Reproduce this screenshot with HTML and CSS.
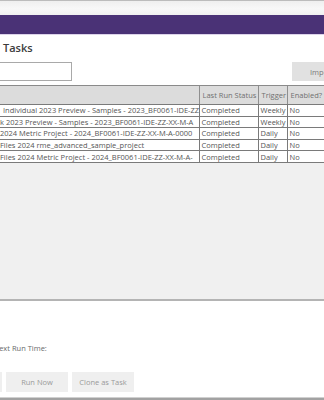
FILE: index.html
```html
<!DOCTYPE html>
<html>
<head>
<meta charset="utf-8">
<link rel="stylesheet" href="styles.css">
</head>
<body>
<div class="app">
  <div class="chrome"></div>
  <div class="topbar"></div>
  <main class="content">
    <h1 class="title">Tasks</h1>
    <div class="toolbar">
      <input class="search" type="text">
      <button class="import">Import...</button>
    </div>
    <div class="grid">
      <table>
        <colgroup>
          <col class="c-name"><col class="c-status"><col class="c-trigger"><col class="c-enabled">
        </colgroup>
        <thead>
          <tr><th></th><th>Last Run Status</th><th>Trigger</th><th>Enabled?</th></tr>
        </thead>
        <tbody>
          <tr><td class="r1"><span class="clip">Individual 2023 Preview - Samples - 2023_BF0061-IDE-ZZ</span></td><td>Completed</td><td>Weekly</td><td>No</td></tr>
          <tr><td><span class="clip">k 2023 Preview - Samples - 2023_BF0061-IDE-ZZ-XX-M-A</span></td><td>Completed</td><td>Weekly</td><td>No</td></tr>
          <tr><td><span class="clip">2024 Metric Project - 2024_BF0061-IDE-ZZ-XX-M-A-0000</span></td><td>Completed</td><td>Daily</td><td>No</td></tr>
          <tr><td><span class="clip">Files 2024 rme_advanced_sample_project</span></td><td>Completed</td><td>Daily</td><td>No</td></tr>
          <tr><td><span class="clip">Files 2024 Metric Project - 2024_BF0061-IDE-ZZ-XX-M-A-</span></td><td>Completed</td><td>Daily</td><td>No</td></tr>
        </tbody>
      </table>
    </div>
    <div class="next-run">Next Run Time:</div>
    <div class="actions">
      <button class="btn"></button>
      <button class="btn">Run Now</button>
      <button class="btn">Clone as Task</button>
    </div>
  </main>
  <div class="bottom-edge"></div>
</div>
</body>
</html>
```
FILE: styles.css
```css
html, body {
  margin: 0;
  padding: 0;
}
body {
  width: 324px;
  height: 400px;
  overflow: hidden;
  background: #ffffff;
  font-family: "Segoe UI", "Open Sans", "Noto Sans", sans-serif;
}
.app {
  display: flex;
  flex-direction: column;
  height: 400px;
}
.chrome {
  height: 14px;
  border-top: 1px solid #bcbcbc;
  background: linear-gradient(#efefef, #f8f8f8 55%, #f0f0f0);
}
.topbar {
  height: 19px;
  background: #4a3276;
  border-bottom: 1px solid #dcd3ea;
}
.content {
  flex: 1;
  display: flex;
  flex-direction: column;
}
.title {
  margin: 6px 0 0;
  padding-left: 3px;
  font-size: 11px;
  font-weight: 600;
  line-height: 14px;
  color: #3c3c3c;
}
.toolbar {
  display: flex;
  align-items: center;
  margin-top: 7px;
  height: 19px;
}
.search {
  flex-shrink: 0;
  margin: 0 0 0 -10px;
  width: 82px;
  height: 19px;
  box-sizing: border-box;
  border: 1px solid #a9a9a9;
  background: #fff;
  padding: 0;
}
.import {
  flex-shrink: 0;
  margin-left: auto;
  margin-right: 0;
  width: 32px;
  height: 19px;
  border: 0;
  padding: 0 0 0 18px;
  text-align: left;
  white-space: nowrap;
  overflow: hidden;
  background: #e1e1e1;
  color: #7a7a7a;
  font-family: inherit;
  font-size: 7.5px;
}
.grid {
  margin-top: 4px;
  height: 213px;
  border-top: 1px solid #8a8a8a;
  border-bottom: 2px solid #b4b4b4;
  background: #f0f0f0;
  overflow: hidden;
}
table {
  border-collapse: collapse;
  table-layout: fixed;
  width: 324px;
  font-size: 7.5px;
  color: #555;
}
.c-name { width: 199px; }
.c-status { width: 59px; }
.c-trigger { width: 29px; }
.c-enabled { width: 37px; }
th {
  height: 18px;
  padding: 0 0 0 3px;
  background: #dcdcdc;
  border-right: 1px solid #8f8f8f;
  border-bottom: 1px solid #7a7a7a;
  font-weight: 400;
  color: #707070;
  text-align: left;
  white-space: nowrap;
  overflow: hidden;
}
th:last-child {
  border-right: 0;
}
td {
  height: 10.6px;
  padding: 0 0 0 2px;
  border: 1px solid #7a7a7a;
  background: #fff;
  white-space: nowrap;
  overflow: hidden;
  line-height: 10px;
}
td:first-child {
  border-left: 0;
  padding-left: 0;
}
td:last-child {
  border-right: 0;
}
td.r1 {
  padding-left: 3px;
}
.clip {
  display: block;
  overflow: hidden;
  white-space: nowrap;
}
.next-run {
  margin: 42px 0 0 -6.5px;
  font-size: 7.5px;
  line-height: 10px;
  color: #6a6a6a;
}
.actions {
  display: flex;
  gap: 4px;
  margin: 19px 0 0 -60px;
}
.btn {
  flex-shrink: 0;
  width: 62px;
  height: 20px;
  border: 0;
  padding: 0;
  background: #efefef;
  color: #9a9a9a;
  font-family: inherit;
  font-size: 7.5px;
}
.bottom-edge {
  height: 2px;
  border-top: 1px solid #d0d0d0;
  background: #a2a2a2;
}
```
